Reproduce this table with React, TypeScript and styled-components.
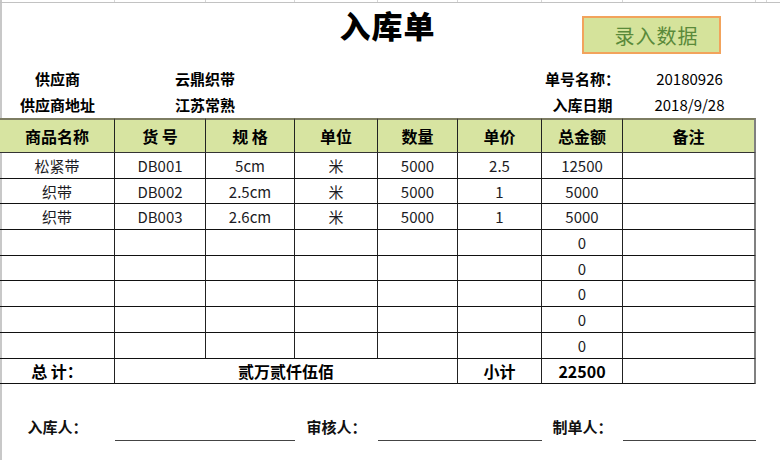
import React from 'react';
import styled, { createGlobalStyle } from 'styled-components';

const COLS = '115px 91px 89px 83px 80px 84px 81px 133px';

const Global = createGlobalStyle`
  html, body { margin: 0; padding: 0; background: #fff; }
  body { font-family: "Noto Sans CJK SC", "Noto Sans", sans-serif; color: #111; }
`;

const Page = styled.div`
  width: 780px;
  height: 460px;
  overflow: hidden;
  background: #fff;
  box-shadow: inset 2px 0 0 #c8c8c8;
  display: flex;
  flex-direction: column;
`;

const GridStrip = styled.div`
  display: grid;
  grid-template-columns: ${COLS} 11px 1fr;
  height: 3px;
  box-sizing: border-box;
  border-bottom: 1px solid #c2c2c2;
`;

const StripCell = styled.div`
  border-right: 1px solid #d6d6d6;
`;

const TitleBar = styled.div`
  display: grid;
  grid-template-columns: 582px 139px 1fr;
  height: 63px;
  align-items: start;
`;

const Title = styled.h1`
  grid-column: 1 / -1;
  grid-row: 1;
  justify-self: center;
  margin: 6px 5px 0 0;
  font-size: 31px;
  line-height: 31px;
  font-weight: 900;
  color: #000;
  letter-spacing: 1px;
`;

const EntryButton = styled.button`
  grid-column: 2;
  grid-row: 1;
  margin-top: 13px;
  height: 38px;
  box-sizing: border-box;
  border: 2px solid #f2a35c;
  background: #d5e39b;
  color: #5a8a3a;
  font-family: "Noto Sans CJK SC", sans-serif;
  font-size: 20px;
  font-weight: 400;
  letter-spacing: 1px;
  padding: 0 0 0 10px;
  display: flex;
  align-items: center;
  justify-content: center;
`;

const InfoGrid = styled.div`
  display: grid;
  grid-template-columns: ${COLS};
  grid-auto-rows: 26px;
`;

const InfoText = styled.div<{ $span?: string; $bold?: boolean }>`
  grid-column: ${(p) => p.$span || 'auto'};
  text-align: center;
  line-height: 26px;
  font-size: 15px;
  font-weight: ${(p) => (p.$bold ? 700 : 400)};
  color: #000;
  white-space: nowrap;
`;

const Table = styled.div`
  display: grid;
  grid-template-columns: ${COLS};
  grid-template-rows: 35px repeat(9, 25.7px);
  width: 756px;
`;

const Cell = styled.div<{ $head?: boolean; $bold?: boolean; $span?: number; $last?: boolean }>`
  grid-column: ${(p) => (p.$span ? `span ${p.$span}` : 'auto')};
  box-sizing: border-box;
  display: flex;
  align-items: center;
  justify-content: center;
  white-space: nowrap;
  font-size: ${(p) => (p.$head || p.$bold ? '16px' : '15px')};
  font-weight: ${(p) => (p.$head || p.$bold ? 700 : 400)};
  color: ${(p) => (p.$head || p.$bold ? '#000' : '#1c1c24')};
  background: ${(p) => (p.$head ? '#d7e4a1' : 'transparent')};
  border-bottom: 1px solid ${(p) => (p.$head ? '#333' : '#111')};
  border-right: ${(p) => (p.$last ? '2px solid #808080' : '1px solid #222')};
  border-top: ${(p) => (p.$head ? '2px solid #7d7d62' : 'none')};
`;

const SignRow = styled.div`
  display: grid;
  grid-template-columns: ${COLS};
  margin-top: 29px;
  height: 28px;
`;

const SignLabel = styled.div`
  text-align: center;
  line-height: 28px;
  font-size: 15px;
  font-weight: 700;
  color: #111;
`;

const SignLine = styled.div<{ $span: number }>`
  grid-column: span ${(p) => p.$span};
  box-sizing: border-box;
  border-bottom: 1px solid #444;
`;

const headers = ['商品名称', '货 号', '规 格', '单位', '数量', '单价', '总金额', '备注'];

const rows: string[][] = [
  ['松紧带', 'DB001', '5cm', '米', '5000', '2.5', '12500', ''],
  ['织带', 'DB002', '2.5cm', '米', '5000', '1', '5000', ''],
  ['织带', 'DB003', '2.6cm', '米', '5000', '1', '5000', ''],
  ['', '', '', '', '', '', '0', ''],
  ['', '', '', '', '', '', '0', ''],
  ['', '', '', '', '', '', '0', ''],
  ['', '', '', '', '', '', '0', ''],
  ['', '', '', '', '', '', '0', ''],
];

export default function App() {
  return (
    <>
      <Global />
      <Page>
        <GridStrip>
          {Array.from({ length: 9 }).map((_, i) => (
            <StripCell key={i} />
          ))}
        </GridStrip>
        <TitleBar>
          <Title>入库单</Title>
          <EntryButton>录入数据</EntryButton>
        </TitleBar>
        <InfoGrid>
          <InfoText $bold>供应商</InfoText>
          <InfoText $bold $span="2 / 4">云鼎织带</InfoText>
          <InfoText $bold $span="7">单号名称：</InfoText>
          <InfoText $span="8">20180926</InfoText>
          <InfoText $bold>供应商地址</InfoText>
          <InfoText $bold $span="2 / 4">江苏常熟</InfoText>
          <InfoText $bold $span="7">入库日期</InfoText>
          <InfoText $span="8">2018/9/28</InfoText>
        </InfoGrid>
        <Table>
          {headers.map((h, i) => (
            <Cell key={h} $head $last={i === 7}>
              {h}
            </Cell>
          ))}
          {rows.map((r, ri) =>
            r.map((v, ci) => (
              <Cell key={`${ri}-${ci}`} $last={ci === 7}>
                {v}
              </Cell>
            ))
          )}
          <Cell $bold>总 计：</Cell>
          <Cell $bold $span={4}>贰万贰仟伍佰</Cell>
          <Cell $bold>小计</Cell>
          <Cell $bold>22500</Cell>
          <Cell $last />
        </Table>
        <SignRow>
          <SignLabel>入库人：</SignLabel>
          <SignLine $span={2} />
          <SignLabel>审核人：</SignLabel>
          <SignLine $span={2} />
          <SignLabel>制单人：</SignLabel>
          <SignLine $span={1} />
        </SignRow>
      </Page>
    </>
  );
}
